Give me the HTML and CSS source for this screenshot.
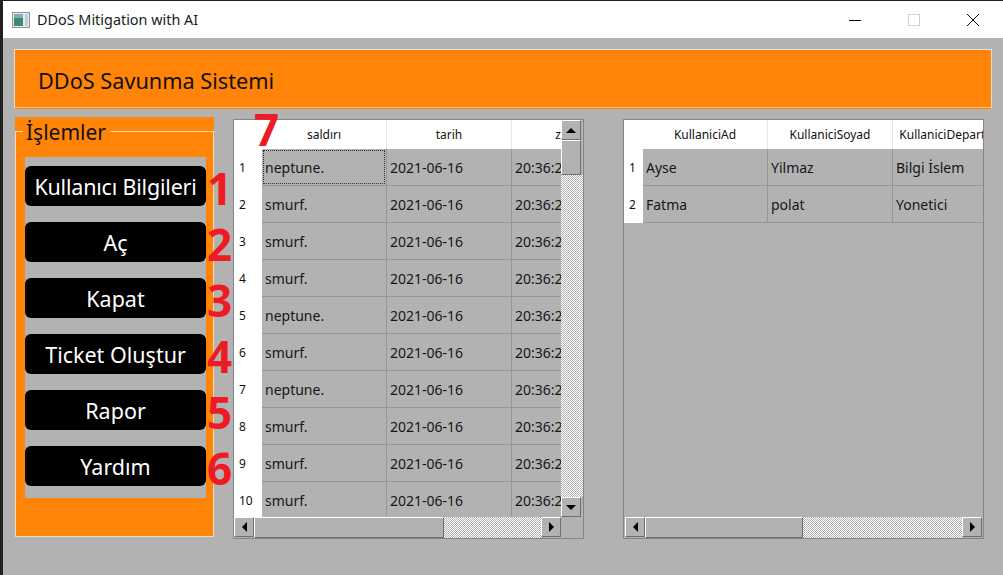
FILE: index.html
```html
<!DOCTYPE html>
<html>

<head>
  <title>DDoS Mitigation with AI</title>
  <link rel="stylesheet" href="styles.css">
</head>

<body>
  <header class="titlebar">
    <svg class="app-icon" width="18" height="16" viewBox="0 0 18 16">
      <rect x="0.5" y="0.5" width="17" height="15" fill="#e6eaec" stroke="#8f9499"/>
      <rect x="2" y="2" width="9" height="12" fill="#3d8c72"/>
      <rect x="2" y="2" width="9" height="4" fill="#86a9bd"/>
      <rect x="13" y="2" width="3" height="12" fill="#c3ced4"/>
    </svg>
    <span class="app-title">DDoS Mitigation with AI</span>
    <div class="win-controls">
      <svg class="win-btn" width="14" height="14" viewBox="0 0 14 14">
        <path d="M1 7.5h12" stroke="#000" fill="none"/>
      </svg>
      <svg class="win-btn" width="14" height="14" viewBox="0 0 14 14">
        <rect x="1.5" y="1.5" width="11" height="11" stroke="#cfcfcf" fill="none"/>
      </svg>
      <svg class="win-btn" width="14" height="14" viewBox="0 0 14 14">
        <path d="M1 1l12 12M13 1L1 13" stroke="#111" fill="none"/>
      </svg>
    </div>
  </header>

  <div class="banner">DDoS Savunma Sistemi</div>

  <div class="content">
    <section class="panel">
      <div class="panel-frame">
        <span class="legend">İşlemler</span>
        <div class="actions">
          <div class="action"><button class="action-btn tight">Kullanıcı Bilgileri</button><span class="mark">1</span></div>
          <div class="action"><button class="action-btn">Aç</button><span class="mark">2</span></div>
          <div class="action"><button class="action-btn">Kapat</button><span class="mark">3</span></div>
          <div class="action"><button class="action-btn">Ticket Oluştur</button><span class="mark">4</span></div>
          <div class="action"><button class="action-btn">Rapor</button><span class="mark">5</span></div>
          <div class="action"><button class="action-btn">Yardım</button><span class="mark">6</span></div>
        </div>
      </div>
    </section>

    <section class="view view-attacks">
      <span class="mark mark-seven">7</span>
      <div class="view-body">
        <div class="table-clip">
          <table class="grid">
            <thead>
              <tr><th class="corner"></th><th>saldırı</th><th>tarih</th><th>zaman</th></tr>
            </thead>
            <tbody>
              <tr><th>1</th><td><span class="focus">neptune.</span></td><td>2021-06-16</td><td>20:36:21</td></tr>
              <tr><th>2</th><td>smurf.</td><td>2021-06-16</td><td>20:36:21</td></tr>
              <tr><th>3</th><td>smurf.</td><td>2021-06-16</td><td>20:36:21</td></tr>
              <tr><th>4</th><td>smurf.</td><td>2021-06-16</td><td>20:36:21</td></tr>
              <tr><th>5</th><td>neptune.</td><td>2021-06-16</td><td>20:36:21</td></tr>
              <tr><th>6</th><td>smurf.</td><td>2021-06-16</td><td>20:36:21</td></tr>
              <tr><th>7</th><td>neptune.</td><td>2021-06-16</td><td>20:36:21</td></tr>
              <tr><th>8</th><td>smurf.</td><td>2021-06-16</td><td>20:36:21</td></tr>
              <tr><th>9</th><td>smurf.</td><td>2021-06-16</td><td>20:36:21</td></tr>
              <tr><th>10</th><td>smurf.</td><td>2021-06-16</td><td>20:36:21</td></tr>
            </tbody>
          </table>
        </div>
        <div class="vbar">
          <div class="sb-btn"><i class="arrow arrow-up"></i></div>
          <div class="sb-thumb vthumb"></div>
          <div class="sb-track"></div>
          <div class="sb-btn"><i class="arrow arrow-down"></i></div>
        </div>
      </div>
      <div class="hbar">
        <div class="sb-btn"><i class="arrow arrow-left"></i></div>
        <div class="sb-thumb hthumb-a"></div>
        <div class="sb-track"></div>
        <div class="sb-btn"><i class="arrow arrow-right"></i></div>
        <div class="sb-corner"></div>
      </div>
    </section>

    <section class="view view-users">
      <div class="view-body">
        <div class="table-clip">
          <table class="grid grid-users">
            <thead>
              <tr><th class="corner"></th><th>KullaniciAd</th><th>KullaniciSoyad</th><th>KullaniciDepartman</th></tr>
            </thead>
            <tbody>
              <tr><th>1</th><td>Ayse</td><td>Yilmaz</td><td>Bilgi İslem</td></tr>
              <tr><th>2</th><td>Fatma</td><td>polat</td><td>Yonetici</td></tr>
            </tbody>
          </table>
        </div>
      </div>
      <div class="hbar">
        <div class="sb-btn"><i class="arrow arrow-left"></i></div>
        <div class="sb-thumb hthumb-b"></div>
        <div class="sb-track"></div>
        <div class="sb-btn"><i class="arrow arrow-right"></i></div>
      </div>
    </section>
  </div>
</body>
</html>
```
FILE: styles.css
```css
html, body {
  height: 100%;
}
body {
  margin: 0;
  padding: 1px 0 0 3px;
  box-sizing: border-box;
  overflow: hidden;
  background: #b2b2b2;
  font-family: "Noto Sans", "Open Sans", sans-serif;
  color: #000;
  position: relative;
}
body::before {
  content: "";
  position: absolute;
  left: 0;
  top: 0;
  width: 3px;
  height: 100%;
  background: #202020;
}
body::after {
  content: "";
  position: absolute;
  left: 0;
  top: 0;
  width: 100%;
  height: 1px;
  background: #202020;
}

/* title bar */
.titlebar {
  display: flex;
  align-items: center;
  height: 37px;
  background: #fff;
  padding-left: 9px;
}
.app-icon {
  flex: none;
}
.app-title {
  margin-left: 7px;
  font-size: 14.4px;
  color: #1a1a1a;
}
.win-controls {
  margin-left: auto;
  display: flex;
  gap: 45px;
  padding-right: 23px;
}
.win-btn {
  display: block;
}

/* banner */
.banner {
  margin: 11px 11px 0 11px;
  height: 60px;
  box-sizing: border-box;
  background: #ff8408;
  border: 1px solid #e6e0d8;
  border-bottom: 1px solid #ff8408;
  box-shadow: inset 0 -1px 0 #f4c48e;
  padding: 2px 0 0 23px;
  display: flex;
  align-items: center;
  font-size: 21.7px;
  color: #111;
}

/* main row */
.content {
  display: flex;
  align-items: flex-start;
  padding: 8px 0 0 12px;
}

/* left panel */
.panel {
  width: 199px;
  height: 420px;
  background: #ff8408;
  padding-top: 14px;
  box-sizing: border-box;
}
.panel-frame {
  position: relative;
  height: 100%;
  box-sizing: border-box;
  border: 1px solid #f5d9b8;
  padding: 25px 7px 0 9px;
}
.legend {
  position: absolute;
  left: 7px;
  top: -15px;
  padding: 0 4px 0 3px;
  background: #ff8408;
  font-size: 21px;
  line-height: 30px;
  color: #111;
}
.actions {
  display: flex;
  flex-direction: column;
  gap: 16px;
  background: #b2b2b2;
  padding: 9px 0 12px;
}
.action {
  position: relative;
}
.action-btn {
  display: block;
  width: 100%;
  height: 40px;
  border: 0;
  border-radius: 6px;
  background: #000;
  color: #fff;
  padding: 0;
  font-family: inherit;
  font-size: 21.5px;
}
.tight {
  letter-spacing: -0.2px;
}

/* red callouts on top of the screenshot */
.mark {
  position: absolute;
  left: 182px;
  top: -2px;
  font-family: "Open Sans", sans-serif;
  font-weight: 700;
  font-size: 44px;
  line-height: 48px;
  color: #ed1c24;
}
.mark-seven {
  left: 20px;
  top: -15px;
  z-index: 2;
}

/* table views */
.view {
  position: relative;
  height: 420px;
  box-sizing: border-box;
  border: 1px solid #84868c;
  margin-top: 2px;
  display: flex;
  flex-direction: column;
}
.view-attacks {
  width: 351px;
  margin-left: 19px;
}
.view-users {
  width: 361px;
  margin-left: 39px;
}
.view-body {
  display: flex;
  height: 397px;
}
.table-clip {
  flex: 1;
  min-width: 0;
  overflow: hidden;
}
.grid {
  border-collapse: separate;
  border-spacing: 0;
  table-layout: fixed;
  width: 403px;
  font-size: 14px;
}
.grid-users {
  width: 394px;
}
.grid th {
  background: #fff;
  font-weight: 400;
  font-size: 12px;
  padding: 0;
  color: #111;
  overflow: hidden;
  white-space: nowrap;
}
.grid th:first-child {
  width: 28px;
}
.grid tbody th {
  text-align: left;
  padding-left: 5px;
  box-sizing: border-box;
}
.grid-users th:first-child {
  width: 19px;
}
.grid thead th {
  height: 29px;
  box-sizing: border-box;
  border-right: 1px solid #e8e8e8;
}
.grid thead th.corner {
  border-right: 0;
}
.grid td {
  height: 37px;
  padding: 0 0 0 3px;
  box-sizing: border-box;
  border-right: 1px solid #979797;
  border-bottom: 1px solid #979797;
  white-space: nowrap;
  overflow: hidden;
  position: relative;
  color: #161616;
}
.focus::after {
  content: "";
  position: absolute;
  inset: 1px;
  border: 1px dotted #333;
}

/* scrollbars */
.vbar {
  width: 22px;
  flex: none;
  display: flex;
  flex-direction: column;
}
.hbar {
  display: flex;
  height: 21px;
  flex: none;
}
.sb-btn {
  flex: none;
  width: 20px;
  height: 20px;
  box-sizing: border-box;
  border: 1px solid;
  border-color: #fff #6f6f6f #6f6f6f #fff;
  display: flex;
  align-items: center;
  justify-content: center;
}
.sb-thumb {
  flex: none;
  box-sizing: border-box;
  border: 1px solid;
  border-color: #fff #6f6f6f #6f6f6f #fff;
}
.vthumb {
  height: 35px;
  width: 20px;
}
.hthumb-a {
  width: 190px;
}
.hthumb-b {
  width: 158px;
}
.sb-track {
  flex: 1;
  background: repeating-conic-gradient(#fff 0 25%, #b2b2b2 0 50%) 0 0 / 2px 2px;
}
.sb-corner {
  flex: none;
  width: 22px;
}
.view-users .hbar {
  padding-left: 1px;
}
.view-users .sb-btn:last-child {
  margin-right: 1px;
}
.arrow {
  display: block;
  width: 0;
  height: 0;
  border: 5px solid transparent;
}
.arrow-up {
  border-top: 0;
  border-bottom-color: #000;
}
.arrow-down {
  border-bottom: 0;
  border-top-color: #000;
}
.arrow-left {
  border-left: 0;
  border-right-color: #000;
}
.arrow-right {
  border-right: 0;
  border-left-color: #000;
}
```
